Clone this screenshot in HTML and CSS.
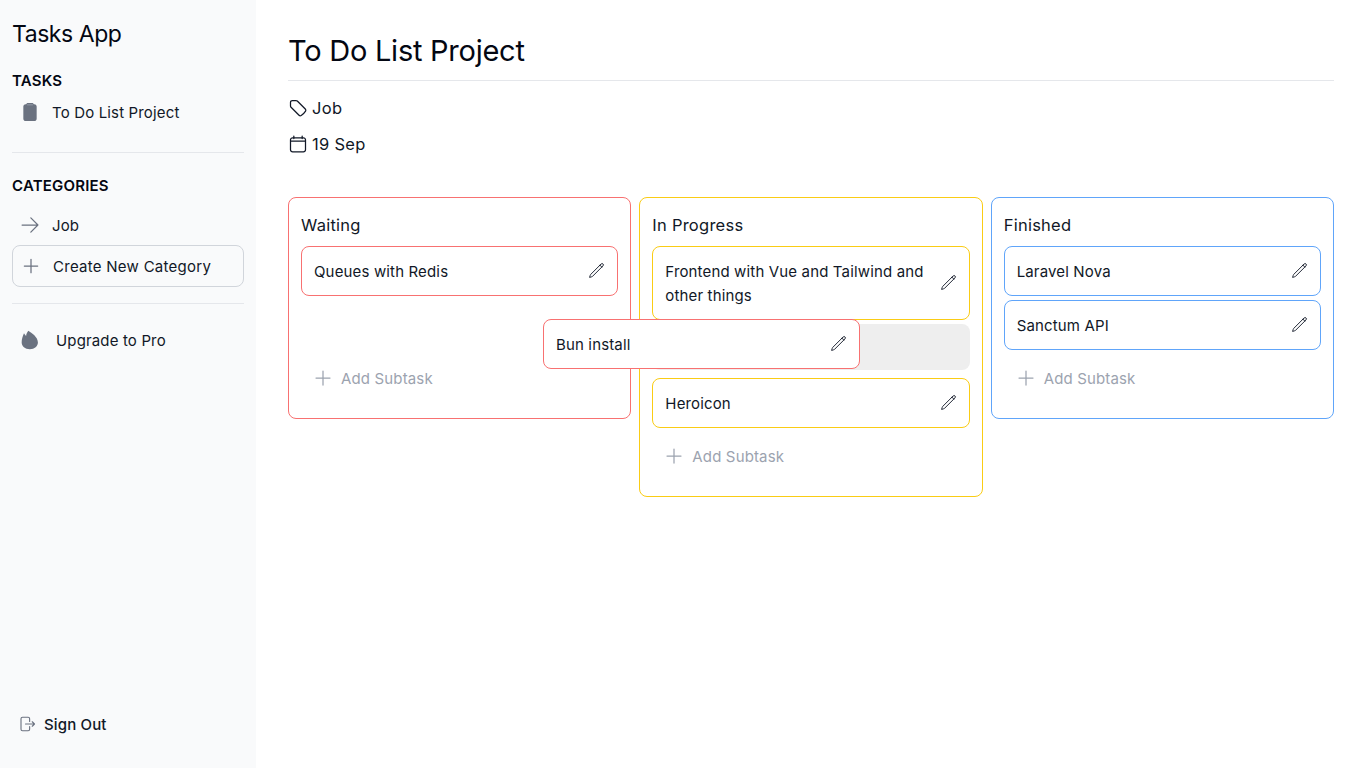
FILE: index.html
```html
<!DOCTYPE html>
<html lang="en">
<head>
    <meta charset="UTF-8">
    <meta name="viewport" content="width=device-width, initial-scale=1.0">
    <title>Tasks App</title>
    <link rel="stylesheet" href="styles.css">
</head>
<body>
    <aside class="sidebar">
        <div class="brand">Tasks App</div>
        <h2 class="side-title">TASKS</h2>
        <a class="side-link task-link">
            <svg class="side-icon" viewBox="0 0 24 24" fill="#6b7280"><path d="M9.500 1.200h5c.9 0 1.700.6 2 1.400h.7C19 2.600 20 3.900 20 5.500v14.500c0 1.600-1.300 2.800-2.900 2.800H6.900C5.300 22.800 4 21.600 4 20V5.500C4 3.900 5 2.600 6.800 2.600h.7c.3-.8 1.100-1.400 2-1.400z"/><path d="M8.500 3.400h7" stroke="#9ca3af" stroke-width="1"/></svg>
            <span>To Do List Project</span>
        </a>
        <div class="side-rule first-rule"></div>
        <h2 class="side-title">CATEGORIES</h2>
        <a class="side-link cat-link">
            <svg class="side-icon" viewBox="0 0 24 24" fill="none" stroke="#6b7280" stroke-width="1.500" stroke-linecap="round" stroke-linejoin="round"><path d="M2.500 12h19M13 3.500l8.500 8.500-8.500 8.500"/></svg>
            <span>Job</span>
        </a>
        <a class="new-cat">
            <svg class="side-icon" viewBox="0 0 24 24" fill="none" stroke="#6b7280" stroke-width="1.500" stroke-linecap="round"><path d="M12 4v16M4 12h16"/></svg>
            <span>Create New Category</span>
        </a>
        <div class="side-rule"></div>
        <a class="side-link upgrade">
            <svg class="side-icon" viewBox="0 0 24 24" fill="#6b7280"><path d="M10 1c4 2.500 11.500 7.500 11.500 14 0 4.500-4 8-9.700 8C6 23 2 19.500 2 15c0-4 1.200-7.500 2.800-11 .7 1.500 1.700 2.500 2.500 3.200C7.500 5 8.500 2.800 10 1z"/></svg>
            <span>Upgrade to Pro</span>
        </a>
        <a class="sign-out">
            <svg class="out-icon" viewBox="0 0 24 24" fill="none" stroke="#6b7280" stroke-width="1.500" stroke-linecap="round" stroke-linejoin="round"><path d="M15.500 8.500V5a2 2 0 0 0-2-2H6a2 2 0 0 0-2 2v14a2 2 0 0 0 2 2h7.500a2 2 0 0 0 2-2v-3.500M10 12h12M19 9l3 3-3 3"/></svg>
            <span>Sign Out</span>
        </a>
    </aside>

    <main class="content">
        <h1 class="page-title">To Do List Project</h1>
        <div class="meta">
            <svg class="meta-icon" viewBox="0 0 24 24" fill="none" stroke="#111827" stroke-width="1.500" stroke-linecap="round" stroke-linejoin="round"><path d="M9.568 3H5.250A2.250 2.250 0 0 0 3 5.250v4.318c0 .597.237 1.170.659 1.591l9.581 9.581c.699.699 1.780.872 2.607.330a18.095 18.095 0 0 0 5.223-5.223c.542-.827.369-1.908-.330-2.607L11.160 3.660A2.250 2.250 0 0 0 9.568 3z"/></svg>
            <span>Job</span>
        </div>
        <div class="meta">
            <svg class="meta-icon" viewBox="0 0 24 24" fill="none" stroke="#111827" stroke-width="1.500" stroke-linecap="round" stroke-linejoin="round"><path d="M7 2.500v3M17 2.500v3M3 8.500h18M5.500 4.500h13A2.500 2.500 0 0 1 21 7v12a2.500 2.500 0 0 1-2.500 2.500h-13A2.500 2.500 0 0 1 3 19V7a2.500 2.500 0 0 1 2.500-2.500z"/></svg>
            <span>19 Sep</span>
        </div>

        <div class="board">
            <section class="column col-red">
                <h3 class="col-title">Waiting</h3>
                <div class="task-list">
                    <div class="task">
                        <span>Queues with Redis</span>
                        <svg class="pencil" viewBox="0 0 24 24" fill="none" stroke="#111827" stroke-width="1.300" stroke-linecap="round" stroke-linejoin="round"><path d="M16.862 4.487l1.687-1.688a1.875 1.875 0 1 1 2.652 2.652L6.832 19.820a4.500 4.500 0 0 1-1.897 1.130l-2.685.8.8-2.685a4.500 4.500 0 0 1 1.130-1.897L16.863 4.487zm0 0L19.500 7.125"/></svg>
                    </div>
                </div>
                <a class="add-task">
                    <svg class="add-icon" viewBox="0 0 24 24" fill="none" stroke="#9ca3af" stroke-width="1.500" stroke-linecap="round"><path d="M12 3.600v16.800M3.600 12h16.800"/></svg>
                    <span>Add Subtask</span>
                </a>
            </section>

            <section class="column col-yellow">
                <h3 class="col-title">In Progress</h3>
                <div class="task-list">
                    <div class="task">
                        <span>Frontend with Vue and Tailwind and other things</span>
                        <svg class="pencil" viewBox="0 0 24 24" fill="none" stroke="#111827" stroke-width="1.300" stroke-linecap="round" stroke-linejoin="round"><path d="M16.862 4.487l1.687-1.688a1.875 1.875 0 1 1 2.652 2.652L6.832 19.820a4.500 4.500 0 0 1-1.897 1.130l-2.685.8.8-2.685a4.500 4.500 0 0 1 1.130-1.897L16.863 4.487zm0 0L19.500 7.125"/></svg>
                    </div>
                    <div class="drop-slot"></div>
                    <div class="task">
                        <span>Heroicon</span>
                        <svg class="pencil" viewBox="0 0 24 24" fill="none" stroke="#111827" stroke-width="1.300" stroke-linecap="round" stroke-linejoin="round"><path d="M16.862 4.487l1.687-1.688a1.875 1.875 0 1 1 2.652 2.652L6.832 19.820a4.500 4.500 0 0 1-1.897 1.130l-2.685.8.8-2.685a4.500 4.500 0 0 1 1.130-1.897L16.863 4.487zm0 0L19.500 7.125"/></svg>
                    </div>
                </div>
                <a class="add-task">
                    <svg class="add-icon" viewBox="0 0 24 24" fill="none" stroke="#9ca3af" stroke-width="1.500" stroke-linecap="round"><path d="M12 3.600v16.800M3.600 12h16.800"/></svg>
                    <span>Add Subtask</span>
                </a>
            </section>

            <section class="column col-blue">
                <h3 class="col-title">Finished</h3>
                <div class="task-list">
                    <div class="task">
                        <span>Laravel Nova</span>
                        <svg class="pencil" viewBox="0 0 24 24" fill="none" stroke="#111827" stroke-width="1.300" stroke-linecap="round" stroke-linejoin="round"><path d="M16.862 4.487l1.687-1.688a1.875 1.875 0 1 1 2.652 2.652L6.832 19.820a4.500 4.500 0 0 1-1.897 1.130l-2.685.8.8-2.685a4.500 4.500 0 0 1 1.130-1.897L16.863 4.487zm0 0L19.500 7.125"/></svg>
                    </div>
                    <div class="task">
                        <span>Sanctum API</span>
                        <svg class="pencil" viewBox="0 0 24 24" fill="none" stroke="#111827" stroke-width="1.300" stroke-linecap="round" stroke-linejoin="round"><path d="M16.862 4.487l1.687-1.688a1.875 1.875 0 1 1 2.652 2.652L6.832 19.820a4.500 4.500 0 0 1-1.897 1.130l-2.685.8.8-2.685a4.500 4.500 0 0 1 1.130-1.897L16.863 4.487zm0 0L19.500 7.125"/></svg>
                    </div>
                </div>
                <a class="add-task">
                    <svg class="add-icon" viewBox="0 0 24 24" fill="none" stroke="#9ca3af" stroke-width="1.500" stroke-linecap="round"><path d="M12 3.600v16.800M3.600 12h16.800"/></svg>
                    <span>Add Subtask</span>
                </a>
            </section>
        </div>

        <!-- card being dragged, floats over the columns -->
        <div class="task dragging">
            <span>Bun install</span>
            <svg class="pencil" viewBox="0 0 24 24" fill="none" stroke="#111827" stroke-width="1.300" stroke-linecap="round" stroke-linejoin="round"><path d="M16.862 4.487l1.687-1.688a1.875 1.875 0 1 1 2.652 2.652L6.832 19.820a4.500 4.500 0 0 1-1.897 1.130l-2.685.8.8-2.685a4.500 4.500 0 0 1 1.130-1.897L16.863 4.487zm0 0L19.500 7.125"/></svg>
        </div>
    </main>
</body>
</html>
```

FILE: styles.css
```css
* {
    box-sizing: border-box;
}
body {
    margin: 0;
    height: 768px;
    display: flex;
    font-family: Inter, "Noto Sans", sans-serif;
    font-size: 15px;
    letter-spacing: 0.15px;
    color: #111827;
    background-color: #fff;
    overflow: hidden;
}
.sidebar {
    width: 256px;
    flex-shrink: 0;
    height: 768px;
    padding: 21px 12px 0;
    background-color: #f9fafb;
    display: flex;
    flex-direction: column;
}
.brand {
    font-size: 23px;
    line-height: 26px;
    letter-spacing: -0.45px;
    color: #030712;
}
.side-title {
    margin: 23px 0 0;
    font-size: 15px;
    line-height: 22px;
    font-weight: 600;
    letter-spacing: 0.2px;
    color: #030712;
}
.first-rule + .side-title {
    margin-top: 22px;
}
.side-link {
    display: flex;
    align-items: center;
    gap: 12px;
    padding: 0 8px;
    height: 40px;
}
.side-icon {
    width: 20px;
    height: 20px;
    flex-shrink: 0;
}
.task-link {
    height: 32px;
    margin-top: 4px;
}
.side-rule {
    height: 1px;
    margin-top: 16px;
    background-color: #e5e7eb;
}
.first-rule {
    margin-top: 24px;
}
.cat-link {
    margin-top: 8px;
}
.new-cat {
    display: flex;
    align-items: center;
    gap: 12px;
    height: 42px;
    padding: 0 8px;
    border: 1px solid #d1d5db;
    border-radius: 8px;
    letter-spacing: 0.27px;
}
.upgrade {
    margin-top: 16px;
    gap: 16px;
}
.sign-out {
    display: flex;
    align-items: center;
    gap: 8px;
    margin-top: auto;
    margin-bottom: 32px;
    padding-left: 6px;
    height: 24px;
    font-weight: 500;
}
.out-icon {
    width: 18px;
    height: 18px;
}
.content {
    position: relative;
    flex: 1;
    padding: 32px 32px 0;
}
.page-title {
    margin: 0 0 13px;
    padding-bottom: 11px;
    border-bottom: 1px solid #e5e7eb;
    font-size: 29px;
    line-height: 37px;
    font-weight: 400;
    letter-spacing: -0.25px;
    color: #030712;
}
.meta {
    display: flex;
    align-items: center;
    gap: 4px;
    height: 28px;
    margin-bottom: 8px;
    font-size: 16.500px;
    letter-spacing: 0.3px;
}
.meta-icon {
    width: 20px;
    height: 20px;
}
.board {
    display: grid;
    grid-template-columns: repeat(3, 1fr);
    gap: 8px;
    align-items: start;
    margin-top: 39px;
}
.column {
    padding: 16px 12px 28px;
    border: 1px solid;
    border-radius: 8px;
}
.col-red {
    border-color: #f87171;
}
.col-yellow {
    border-color: #facc15;
}
.col-blue {
    border-color: #60a5fa;
}
.col-title {
    margin: 0 0 10px;
    font-size: 16.500px;
    line-height: 22px;
    font-weight: 400;
    letter-spacing: 0.25px;
}
.task-list {
    display: flex;
    flex-direction: column;
    gap: 4px;
    min-height: 104px;
}
.task {
    display: flex;
    align-items: center;
    justify-content: space-between;
    gap: 12px;
    padding: 13px 12px 11px;
    background-color: #fff;
    border: 1px solid;
    border-radius: 8px;
    line-height: 24px;
}
.col-red .task {
    border-color: #f87171;
}
.col-yellow .task {
    border-color: #facc15;
}
.col-blue .task {
    border-color: #60a5fa;
}
.pencil {
    width: 17px;
    height: 17px;
    margin-top: -3px;
    flex-shrink: 0;
}
.drop-slot {
    height: 46px;
    margin-bottom: 4px;
    background-color: #eeeeee;
    border-radius: 8px;
}
.add-task {
    display: flex;
    align-items: center;
    gap: 8px;
    margin-top: 16px;
    padding-left: 12px;
    height: 24px;
    color: #9ca3af;
}
.add-icon {
    width: 20px;
    height: 20px;
}
.dragging {
    position: absolute;
    left: 287px;
    top: 319px;
    width: 317px;
    border-color: #f87171;
}
```
